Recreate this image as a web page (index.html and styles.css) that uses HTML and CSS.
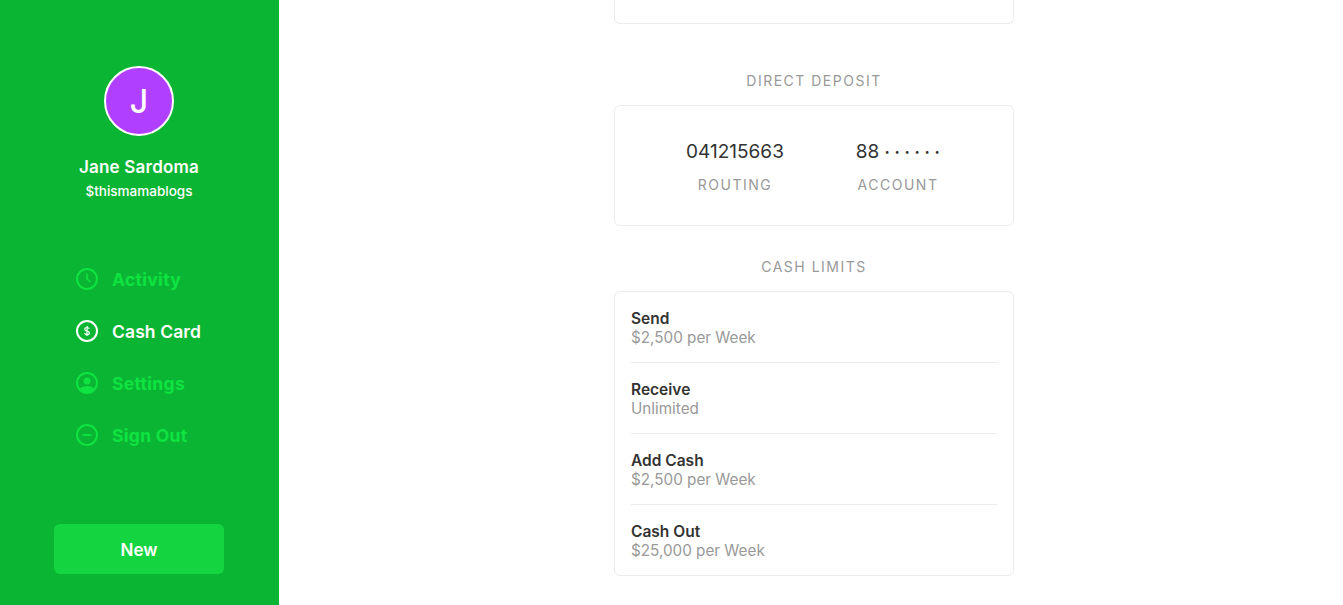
FILE: index.html
```html
<!DOCTYPE html>
<html lang="en">
<head>
<meta charset="utf-8">
<title>Cash Card</title>
<link rel="stylesheet" href="styles.css">
</head>
<body>
<aside class="sidebar">
  <div class="avatar">J</div>
  <div class="name">Jane Sardoma</div>
  <div class="handle">$thismamablogs</div>
  <nav class="nav">
    <a class="nav-item">
      <svg class="nav-icon" viewBox="0 0 22 22" fill="none" stroke="currentColor" stroke-width="2"><circle cx="11" cy="11" r="10"/><path d="M11 5.5V11l3.5 3" stroke-width="1.6"/></svg>
      <span>Activity</span>
    </a>
    <a class="nav-item active">
      <svg class="nav-icon" viewBox="0 0 22 22" fill="none" stroke="currentColor" stroke-width="2"><circle cx="11" cy="11" r="10"/><path d="M13.3 8.8c-.4-.9-1.200-1.300-2.300-1.300-1.300 0-2.200.7-2.200 1.700 0 2.400 4.600 1.300 4.600 3.700 0 1-1 1.700-2.400 1.700-1.200 0-2.100-.5-2.500-1.400M11.300 6l-.5 10" stroke-width="1.200"/></svg>
      <span>Cash Card</span>
    </a>
    <a class="nav-item">
      <svg class="nav-icon" viewBox="0 0 22 22" fill="none" stroke="currentColor" stroke-width="2"><circle cx="11" cy="11" r="10"/><circle cx="11" cy="9" r="3.500" fill="currentColor" stroke="none"/><path d="M3.800 17c1.500-2 4-3 7.200-3s5.700 1 7.200 3c-1.800 2.500-4.300 4-7.200 4s-5.400-1.500-7.200-4z" fill="currentColor" stroke="none"/></svg>
      <span>Settings</span>
    </a>
    <a class="nav-item">
      <svg class="nav-icon" viewBox="0 0 22 22" fill="none" stroke="currentColor" stroke-width="2"><circle cx="11" cy="11" r="10"/><path d="M6.500 11h9" stroke-width="1.800"/></svg>
      <span>Sign Out</span>
    </a>
  </nav>
  <button class="new-btn">New</button>
</aside>
<main class="main">
  <div class="card card-clipped"></div>
  <h2 class="label label-first">DIRECT DEPOSIT</h2>
  <section class="card deposit">
    <div class="deposit-col">
      <div class="deposit-num">041215663</div>
      <div class="deposit-cap">ROUTING</div>
    </div>
    <div class="deposit-col">
      <div class="deposit-num account-num">88<span class="dots">······</span></div>
      <div class="deposit-cap">ACCOUNT</div>
    </div>
  </section>
  <h2 class="label">CASH LIMITS</h2>
  <section class="card limits">
    <div class="limit"><div class="limit-title">Send</div><div class="limit-value">$2,500 per Week</div></div>
    <div class="limit"><div class="limit-title">Receive</div><div class="limit-value">Unlimited</div></div>
    <div class="limit"><div class="limit-title">Add Cash</div><div class="limit-value">$2,500 per Week</div></div>
    <div class="limit"><div class="limit-title">Cash Out</div><div class="limit-value">$25,000 per Week</div></div>
  </section>
</main>
</body>
</html>
```
FILE: styles.css
```css
* { box-sizing: border-box; }
html, body { margin: 0; height: 100%; overflow: hidden; }
body {
  display: flex;
  background: #fff;
  font-family: Inter, "Liberation Sans", sans-serif;
  color: #333;
}
.sidebar {
  width: 279px;
  height: 605px;
  flex: none;
  background: #0bb534;
  color: #fff;
  display: flex;
  flex-direction: column;
  align-items: center;
  padding: 66px 1px 0 0;
}
.avatar {
  width: 70px;
  height: 70px;
  border-radius: 50%;
  border: 2px solid #fff;
  background: #b13fff;
  display: flex;
  align-items: center;
  justify-content: center;
  font-size: 32px;
  font-weight: 500;
}
.name {
  margin-top: 20px;
  font-size: 17px;
  line-height: 22px;
  letter-spacing: 0.2px;
  font-weight: 600;
}
.handle {
  margin-top: 4px;
  font-size: 13.5px;
  line-height: 18px;
  font-weight: 500;
}
.nav {
  margin-top: 68px;
  width: 100%;
  padding-left: 76px;
  display: flex;
  flex-direction: column;
  gap: 30px;
}
.nav-item {
  display: flex;
  align-items: center;
  gap: 14px;
  height: 22px;
  font-size: 17.5px;
  font-weight: 700;
  letter-spacing: 0.3px;
  color: #0fe341;
}
.nav-item.active { color: #fff; font-weight: 600; letter-spacing: 0.1px; }
.nav-icon { width: 22px; height: 22px; flex: none; }
.new-btn {
  margin-top: auto;
  margin-bottom: 31px;
  padding-top: 2px;
  width: 170px;
  height: 50px;
  border: 0;
  border-radius: 6px;
  background: #14d53f;
  color: #fff;
  font: 600 17px Inter, "Liberation Sans", sans-serif;
}
.main {
  margin-left: 335px;
  width: 400px;
  flex: none;
}
.card {
  border: 1px solid #ececec;
  border-radius: 6px;
  background: #fff;
}
.card-clipped {
  height: 24px;
  border-top: 0;
  border-top-left-radius: 0;
  border-top-right-radius: 0;
}
.label {
  margin: 32px 0 15px;
  text-align: center;
  font-size: 14px;
  line-height: 18px;
  font-weight: 400;
  letter-spacing: 1.5px;
  color: #999;
}
.label-first { margin-top: 48px; }
.deposit {
  height: 121px;
  display: flex;
  justify-content: center;
  gap: 64px;
  padding: 33px 0 0 5px;
}
.deposit-col {
  display: flex;
  flex-direction: column;
  align-items: center;
  width: 99px;
}
.deposit-num {
  height: 26px;
  font-size: 19px;
  line-height: 26px;
  white-space: nowrap;
}
.account-num { padding-left: 4px; }
.dots {
  margin-left: 5px;
  letter-spacing: 4.2px;
  font-weight: 500;
  line-height: 1;
  vertical-align: -1px;
}
.deposit-cap {
  margin-top: 11px;
  font-size: 14px;
  line-height: 18px;
  letter-spacing: 1.5px;
  color: #999;
}
.limits {
  height: 285px;
  padding: 0 16px;
}
.limit {
  height: 71px;
  padding-top: 17px;
  border-bottom: 1px solid #ececec;
}
.limit:last-child { border-bottom: 0; }
.limit-title {
  font-size: 15.5px;
  line-height: 19px;
  font-weight: 600;
}
.limit-value {
  font-size: 15.25px;
  line-height: 19px;
  color: #999;
}
```
